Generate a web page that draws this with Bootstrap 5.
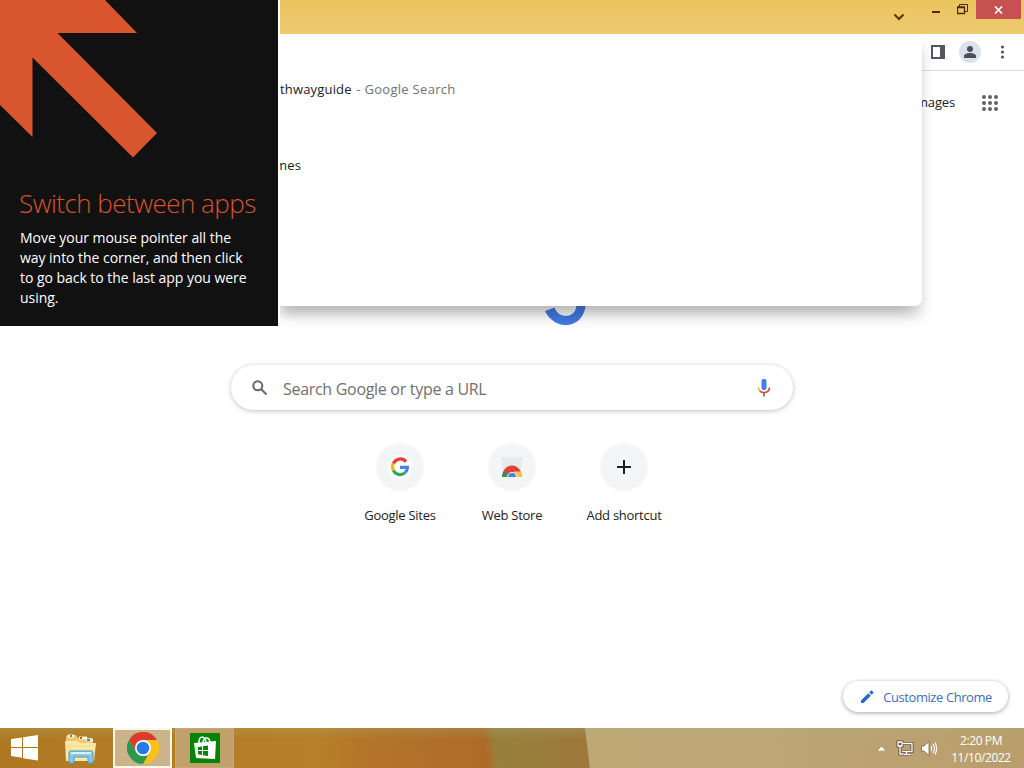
<!DOCTYPE html>
<html lang="en">
<head>
  <meta charset="UTF-8" />
  <meta name="viewport" content="width=device-width, initial-scale=1.0"/>
  <title>New Tab</title>
  <link href="https://cdn.jsdelivr.net/npm/bootstrap@5.3.0/dist/css/bootstrap.min.css" rel="stylesheet"/>
  <style>
    body {
      height: 768px;
      overflow: hidden;
      background: #fff;
      color: #202124;
      font-family: "Open Sans", "Noto Sans", sans-serif;
      font-size: 13px;
      line-height: 20px;
    }
    svg { display: block; flex-shrink: 0; }
    .titlebar { height: 34px; background: linear-gradient(#ecc45f, #eeca70); padding-right: 3px; }
    .chevron-box { margin: 13px 27px 0 0; }
    .min-box { margin: 11px 17px 0 0; }
    .restore-box { margin: 4px 8px 0 0; }
    .close-box { width: 45px; height: 19px; background: #c75050; }
    .toolbar { height: 37px; border-bottom: 1px solid #dadce0; padding-right: 15px; }
    .avatar { width: 22px; height: 22px; background: #dbe2ed; margin: 0 17px 0 14px; }
    .ntp { padding-top: 21px; }
    .ntp-links { height: 20px; padding-right: 25px; }
    .images-link { margin-right: 27px; letter-spacing: -.15px; }
    .apps-icon { margin-top: 2px; }
    .logo { height: 174px; margin-top: 39px; padding: 0 0 0 106px; }
    .search-box {
      width: 562px;
      height: 45px;
      margin-top: 40px;
      padding: 0 22px 0 21px;
      box-shadow: 0 1px 5px rgba(32, 33, 36, .28);
      color: #707070;
      font-size: 16px;
    }
    .search-hint { margin-left: 15px; padding-top: 2px; letter-spacing: -.3px; }
    .shortcuts { margin-top: 33px; }
    .shortcut { width: 112px; }
    .shortcut-icon { width: 48px; height: 48px; background: #f3f5f6; margin-bottom: 14px; }
    .shortcut-label { letter-spacing: -.27px; white-space: nowrap; }
    .customize {
      width: 165px;
      height: 31px;
      margin: 0 16px 16px 0;
      padding: 0 16px 0 17px;
      box-shadow: 0 1px 4px rgba(32, 33, 36, .4);
      color: #3f6dbd;
      letter-spacing: -.42px;
    }
    .suggestions {
      top: 34px;
      left: 280px;
      width: 642px;
      height: 272px;
      border-radius: 0 0 7px 0;
      padding-top: 45px;
      box-shadow: 0 11px 14px -2px rgba(32, 40, 36, .28), -16px 6px 10px rgba(32, 40, 36, .08);
      clip-path: inset(0 -12px -30px 0);
    }
    .suggestion { height: 76px; white-space: nowrap; letter-spacing: .17px; }
    .suggestion-source { color: #6f7276; margin-left: 1px; letter-spacing: .3px; }
    .suggestion-cut { margin-left: -5px; }
    .corner-tip {
      top: 0;
      left: 0;
      width: 280px;
      height: 326px;
      background: #111;
      border-right: 2px solid #fff;
    }
    .tip-text { padding: 0 0 0 20px; margin-top: 25px; }
    .tip-title { color: #d9532c; font-size: 26px; font-weight: 300; line-height: 40px; letter-spacing: -.52px; margin: 0 0 5px -1px; white-space: nowrap; }
    .tip-body { color: #fff; font-size: 14px; line-height: 20px; letter-spacing: -.04px; margin: 0; white-space: nowrap; }
    .taskbar {
      height: 40px;
      color: #fff;
      font-size: 12px;
      line-height: 17px;
      background:
        linear-gradient(rgba(165, 180, 120, .25), transparent 12px),
        linear-gradient(83deg, #b07822 0, #b77f28 320px, #b3742a 370px, #ad6b27 484px, #98803c 495px, #9e783c 585px, #bda775 586px, #bea777 740px, #b99c6c 1024px);
    }
    .task { width: 59px; height: 40px; margin-right: 3px; border: 1px solid #c9a876; background: #c1a06a; }
    .task-active { border: 2px solid #fff8e8; background: #cbb38a; }
    .start-box { width: 48px; }
    .explorer-box { width: 65px; }
    .tray-net { margin: 0 7px 0 10px; }
    .clock { width: 68px; margin: 2px 9px 0 9px; letter-spacing: -.4px; text-align: center; }
  </style>
</head>
<body class="d-flex flex-column position-relative">
  <!-- Window title bar -->
  <header class="titlebar d-flex justify-content-end align-items-start flex-shrink-0">
    <svg class="chevron-box" width="12" height="8" fill="none" stroke="#50350f" stroke-width="2"><path d="M1.500 1.500 6 6l4.500-4.500"/></svg>
    <svg class="min-box" width="8" height="3"><path d="M0 0h8v2H0z" fill="#4a2a10"/></svg>
    <svg class="restore-box" width="11" height="11" fill="none" stroke="#4a2a10"><path d="M2.500 3V.5h8v7H8"/><path d="M.5 3.500h7v6h-7zM0 3h8" stroke-width="1.300"/></svg>
    <div class="close-box d-flex align-items-center justify-content-center">
      <svg width="9" height="8" stroke="#fff" stroke-width="1.700"><path d="m1 .5 7 7m0-7-7 7"/></svg>
    </div>
  </header>

  <div class="toolbar d-flex justify-content-end align-items-center flex-shrink-0">
    <svg width="14" height="14"><path d="M0 0h14v14H0zM2 2v10h7V2z" fill="#54575b" fill-rule="evenodd"/></svg>
    <div class="avatar rounded-circle d-flex align-items-center justify-content-center">
      <svg width="12" height="12" fill="#4a5059"><circle cx="6" cy="3" r="3"/><path d="M0 12v-2c0-2 3-3 6-3s6 1 6 3v2z"/></svg>
    </div>
    <svg width="11" height="14" fill="#55585c"><circle cx="4.500" cy="2" r="1.600"/><circle cx="4.500" cy="7" r="1.600"/><circle cx="4.500" cy="12" r="1.600"/></svg>
  </div>

  <!-- New tab page -->
  <main class="ntp d-flex flex-column align-items-center flex-grow-1">
    <div class="ntp-links d-flex justify-content-end align-items-center align-self-stretch">
      <span class="images-link">Images</span>
      <svg class="apps-icon" width="17" height="16" fill="#5f6368">
        <circle cx="2" cy="2" r="2"/><circle cx="8" cy="2" r="2"/><circle cx="14" cy="2" r="2"/>
        <circle cx="2" cy="8" r="2"/><circle cx="8" cy="8" r="2"/><circle cx="14" cy="8" r="2"/>
        <circle cx="2" cy="14" r="2"/><circle cx="8" cy="14" r="2"/><circle cx="14" cy="14" r="2"/>
      </svg>
    </div>
    <div class="logo d-flex align-items-end">
      <svg width="42" height="23" fill="#4078e4"><path d="M1 9 10.500 5.500C14 17 32 17 32.500 3V0H42C41 29 10 29 1 9z"/></svg>
    </div>
    <div class="search-box rounded-pill d-flex align-items-center flex-shrink-0">
      <svg width="16" height="16" fill="none" stroke="#666" stroke-width="2"><circle cx="5.800" cy="5.800" r="4.500"/><path d="m9 9 5.500 5.500"/></svg>
      <span class="search-hint">Search Google or type a URL</span>
      <svg class="ms-auto" width="14" height="18" fill="none" stroke-width="1.700">
        <rect x="4.500" y="0" width="5" height="11" rx="2" fill="#4280e8"/>
        <path d="M1.500 8.500c0 1.500.5 2.800 1.500 3.800" stroke="#f5bb20"/>
        <path d="M3 12.200c2 2 6 2 8 0 1-1 1.500-2.200 1.500-3.700" stroke="#df4436"/>
        <path d="M7 14v3.500" stroke="#8a6a4c"/>
      </svg>
    </div>
    <div class="shortcuts d-flex">
      <div class="shortcut d-flex flex-column align-items-center">
        <div class="shortcut-icon rounded-circle d-flex align-items-center justify-content-center">
          <svg width="24" height="24" viewBox="0 0 24 24">
            <circle cx="12" cy="12" r="12" fill="#fff"/>
            <g fill="none" stroke-width="3.200">
              <path d="M18 6.700A7.500 7.500 0 0 0 5.300 8.600" stroke="#e34133"/>
              <path d="M5.300 8.600a7.500 7.500 0 0 0 0 6.800" stroke="#f6b90d"/>
              <path d="M5.300 15.400A7.500 7.500 0 0 0 17 17.600" stroke="#33a753"/>
              <path d="M17 17.600a7.500 7.500 0 0 0 2.500-5.300H12" stroke="#4284ee"/>
            </g>
          </svg>
        </div>
        <span class="shortcut-label">Google Sites</span>
      </div>
      <div class="shortcut d-flex flex-column align-items-center">
        <div class="shortcut-icon rounded-circle d-flex align-items-center justify-content-center">
          <svg width="24" height="24" viewBox="0 0 24 24">
            <path d="M1 2c3 1 5 0 8 1h6c3-1 5 0 8-1l-2 13H3z" fill="#e5eaea"/>
            <path d="M2 22a10 11.500 0 0 1 20 0z" fill="#dc4437"/>
            <path d="M2 22c0-2.500.8-4.500 2-6l4.500 6z" fill="#219b58"/>
            <path d="M14 16.500h6.300c1 1.500 1.700 3.500 1.700 5.500h-6z" fill="#f8c53c"/>
            <path d="M7 22a5 5 0 0 1 10 0z" fill="#f1f3f4"/>
            <path d="M8 22a4 4 0 0 1 8 0z" fill="#4284ee"/>
          </svg>
        </div>
        <span class="shortcut-label">Web Store</span>
      </div>
      <div class="shortcut d-flex flex-column align-items-center">
        <div class="shortcut-icon rounded-circle d-flex align-items-center justify-content-center">
          <svg width="14" height="14"><path d="M6 0h2v6h6v2H8v6H6V8H0V6h6z" fill="#202124"/></svg>
        </div>
        <span class="shortcut-label">Add shortcut</span>
      </div>
    </div>
    <div class="customize rounded-pill d-flex align-items-center justify-content-between align-self-end mt-auto flex-shrink-0">
      <svg width="14" height="14" fill="#2467d1"><path d="M1 10.500 8.300 3.200l2.500 2.500L3.500 13H1zM9.200 2.300 10.700.8c.4-.4.8-.4 1.200 0l1.300 1.300c.4.4.4.8 0 1.200l-1.500 1.500z"/></svg>
      <span>Customize Chrome</span>
    </div>
  </main>

  <!-- Windows taskbar -->
  <footer class="taskbar d-flex align-items-center flex-shrink-0">
    <div class="start-box d-flex justify-content-center">
      <svg width="27" height="26" fill="#fff"><path d="m0 4 11-1.500V12H0zM12 2.300 27 0v12H12zM0 13h11v9.700L0 21zM12 13h15v12.500l-15-2.300z"/></svg>
    </div>
    <div class="explorer-box d-flex justify-content-center">
      <svg width="33" height="31" viewBox="0 0 33 31">
        <path d="M2 4q0-2 2-2h8l2 3h13l2 3v19H2z" fill="#e9c96d"/>
        <path d="M4 3h6M15 5h8M22 7h7" stroke="#f9f6dd" stroke-width="3"/>
        <path d="M6 3h2" stroke="#3a9b43" stroke-width="2"/><path d="M16 5h2" stroke="#d15626" stroke-width="2"/><path d="M23 7h3" stroke="#3789c8" stroke-width="2"/>
        <path d="M1 8h12l3 2h16l-2 18H2z" fill="#f9e9a4"/>
        <path d="M3 13h27M3 17h27" stroke="#f2d98a"/>
        <path d="M5 30V20q0-2 2-2h20q2 0 2 2v10h-5v-6H10v6z" fill="#86c9eb" stroke="#4b9cc9"/>
        <path d="M7 20h20" stroke="#d9f3fc" stroke-width="2"/>
      </svg>
    </div>
    <div class="task task-active d-flex align-items-center justify-content-center">
      <svg width="32" height="32" viewBox="0 0 32 32">
        <path d="M16 8h13.900A16 16 0 0 1 16 32l7-12z" fill="#fbc116"/>
        <path d="M2.100 8A16 16 0 0 1 29.900 8H16l-7 12z" fill="#dc3b2e"/>
        <path d="M2.100 8 9 20l7 4h4.600L16 32A16 16 0 0 1 2.100 8z" fill="#2d984c"/>
        <circle cx="16" cy="16" r="8" fill="#fff"/><circle cx="16" cy="16" r="6.300" fill="#2878e7"/>
      </svg>
    </div>
    <div class="task d-flex align-items-center justify-content-center">
      <svg width="30" height="30" viewBox="0 0 30 30">
        <path d="M0 0h30v30H0z" fill="#078407"/>
        <path d="m4 10 22-2-1 18-19-1z" fill="#fff"/>
        <path d="M9 11c-1-9 6-9 7-1M13 9c1-6 7-5 7 1" fill="none" stroke="#fff" stroke-width="1.500"/>
        <path d="m8 14 4-.5V17H8zM13 13.300l5-.8V17h-5zM8 18h4v4l-4-.7zM13 18h5v5l-5-.8z" fill="#078407"/>
      </svg>
    </div>
    <div class="d-flex align-items-center ms-auto">
      <svg width="9" height="5"><path d="m0 5 4.500-5L9 5z" fill="#fff" stroke="#80684b" stroke-width=".5"/></svg>
      <svg class="tray-net" width="18" height="16" fill="none">
        <path d="M7 3.500h9v8H6.500M10.500 12v3M7.500 14.500h7M2 2h4v4H2zM4 6v8h3" stroke="#5f4b34" stroke-width="3"/>
        <path d="M7 3.500h9v8H6.500M10.500 12v3M7.500 14.500h7M2 2h4v4H2zM4 6v8h3" stroke="#fff" stroke-width="1.300"/>
      </svg>
      <svg width="17" height="15" fill="none">
        <path d="M.5 5H3l5-4.500v14L3 10H.5z" fill="#fff" stroke="#66523a" stroke-width=".7"/>
        <path d="M10 5c1 2 1 3 0 5M12 3c2 3 2 6 0 9M14 1.500c2.200 4 2.200 8 0 12" stroke="#fff" stroke-width="1.100"/>
      </svg>
    </div>
    <div class="clock">2:20 PM<br>11/10/2022</div>
  </footer>

  <!-- Omnibox suggestions -->
  <div class="suggestions position-absolute bg-white">
    <div class="suggestion">thwayguide <span class="suggestion-source">- Google Search</span></div>
    <div class="suggestion suggestion-cut">mes</div>
  </div>

  <!-- Corner navigation tip -->
  <aside class="corner-tip position-absolute">
    <svg width="160" height="158"><path d="M0 0h105l32 33H57.500L157 133l-24 24.500L32.500 57.500V137L0 105z" fill="#d9552d"/></svg>
    <div class="tip-text">
      <h1 class="tip-title">Switch between apps</h1>
      <p class="tip-body">Move your mouse pointer all the<br>way into the corner, and then click<br>to go back to the last app you were<br>using.</p>
    </div>
  </aside>

  <script src="https://cdn.jsdelivr.net/npm/bootstrap@5.3.0/dist/js/bootstrap.bundle.min.js"></script>
</body>
</html>
